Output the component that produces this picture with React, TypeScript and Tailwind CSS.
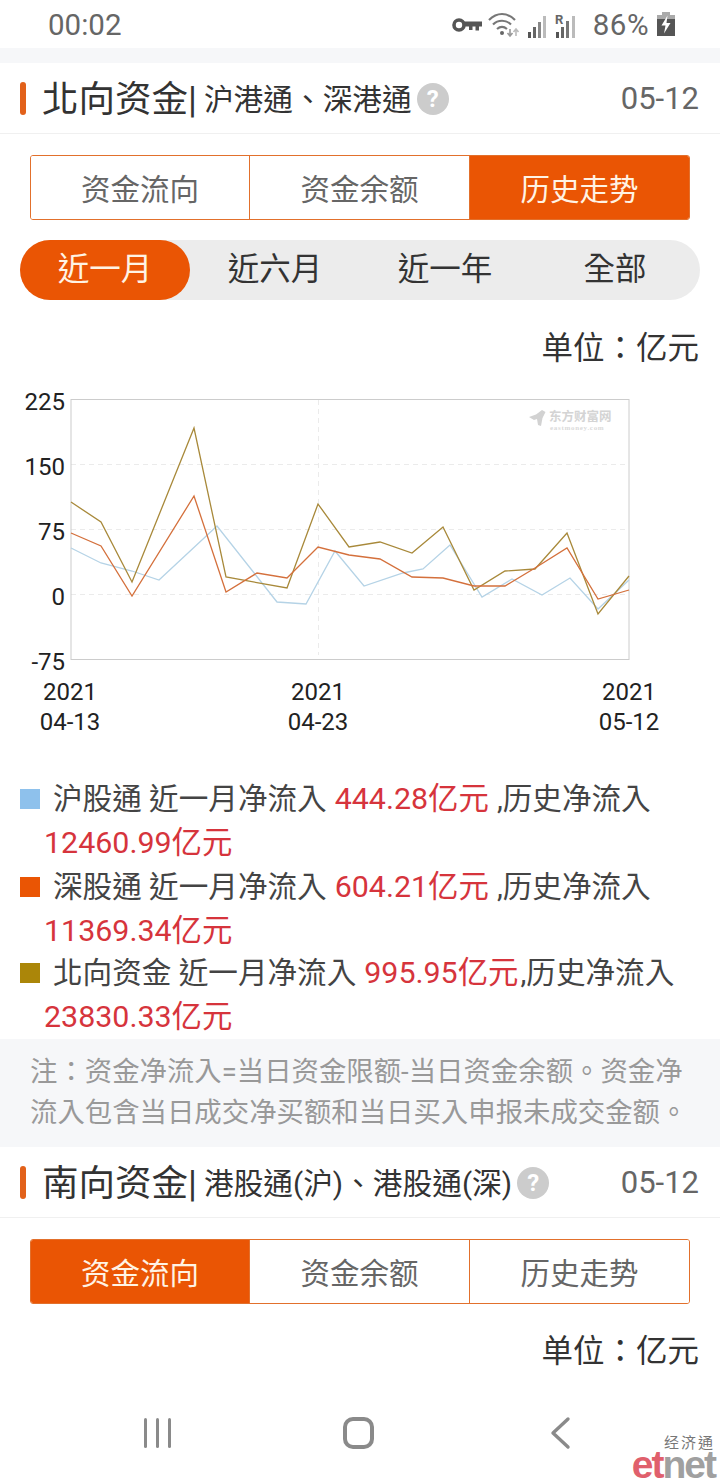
import React from 'react';

const FONT = 'font-["Roboto","Noto_Sans_CJK_TC",sans-serif]';

const gold = '71,502 101,522 132,582 194,428 226,577 287,588 318,504 349,547 380,542 412,553 443,527 474,590 505,571 535,569 567,533 598,614 629,576';
const orange = '71,533 101,546 132,596 194,496 226,592 257,573 287,578 318,547 349,555 380,559 412,577 443,578 474,586 505,586 535,568 567,548 598,599 629,590';
const blue = '71,548 101,563 132,571 159,580 217,526 277,602 306,604 335,551 364,586 403,573 423,569 450,545 482,597 512,579 542,595 570,578 598,609 629,580';

const StatusIcons = () => (
  <svg width="135" height="30" viewBox="0 0 135 30">
    {/* key */}
    <circle cx="11" cy="16" r="5" fill="none" stroke="#555" strokeWidth="3.600" />
    <path d="M16 12.500h18v5h-3v4h-3.500v-4h-3v3.500h-3.500v-3.500h-5z" fill="#555" />
    {/* wifi */}
    <path d="M41 11c8-8 18-8 26 0M45 15.500c5-5 13-5 18 0M49 20c3-2.500 7-2.500 10 0" fill="none" stroke="#777" strokeWidth="2.200" />
    <circle cx="54" cy="24" r="2" fill="#666" />
    <path d="M62 20v6M59.500 24l2.500 3 2.500-3" fill="none" stroke="#999" strokeWidth="1.600" />
    <path d="M68 27v-6M65.500 23l2.500-3 2.500 3" fill="none" stroke="#bbb" strokeWidth="1.600" />
    {/* signal */}
    <rect x="80" y="23" width="3" height="6" fill="#555" />
    <rect x="85" y="18" width="3" height="11" fill="#666" />
    <rect x="90" y="13" width="3" height="16" fill="#888" />
    <rect x="95" y="7" width="3" height="22" fill="#bbb" />
    {/* R signal */}
    <text x="107" y="15" fontSize="13" fontWeight="700" fill="#666" fontFamily="Roboto">R</text>
    <rect x="108" y="23" width="3" height="6" fill="#555" />
    <rect x="113" y="18" width="3" height="11" fill="#666" />
    <rect x="118" y="12" width="3" height="17" fill="#777" />
    <rect x="124" y="7" width="3" height="22" fill="#bbb" />
  </svg>
);

const Battery = () => (
  <svg width="18" height="24" viewBox="0 0 18 24">
    <rect x="5" y="0" width="8" height="3" fill="#aaa" />
    <rect x="0" y="3" width="18" height="4" fill="#aaa" />
    <rect x="0" y="7" width="18" height="17" fill="#555" />
    <path d="M10.500 3.500L4.500 13.500h4l-1.500 8 6.500-10.500h-4z" fill="#fff" />
  </svg>
);

const SectionHeader = ({ title, sub }: { title: string; sub: string }) => (
  <div className="h-[71px] flex items-center pl-5 pr-[21px] border-b border-[#f0f0f0] bg-white">
    <div className="w-[6px] h-[33px] rounded-[3px] bg-[#e2611a] mr-[16px]" />
    <span className="text-[36.500px] leading-[48px] text-[#333] pt-[4px]">{title}</span>
    <span className="text-[36.500px] leading-[48px] text-[#333] mr-[7px] pt-[4px]">|</span>
    <span className="text-[29.700px] leading-[40px] text-[#333] pt-[3px]">{sub}</span>
    <span className="ml-[5px] mt-[2px] w-[32px] h-[32px] rounded-full bg-[#cccccc] text-white text-[24px] font-bold flex items-center justify-center">?</span>
    <span className="ml-auto text-[31px] text-[#666] pt-[3px]">05-12</span>
  </div>
);

const Tabs = ({ active }: { active: number }) => (
  <div className="mx-[30px] h-[65px] flex rounded-[3px] border border-[#e2702c] overflow-hidden">
    {['资金流向', '资金余额', '历史走势'].map((t, i) => (
      <div
        key={t}
        className={`flex items-center justify-center pt-[5px] text-[29.500px] ${i === 0 ? 'w-[218px]' : i === 1 ? 'w-[220px]' : 'flex-1'} ${i > 0 ? 'border-l border-[#e2702c]' : ''} ${
          i === active ? 'bg-[#ea5504] text-[#fff3e4]' : 'bg-white text-[#666]'
        }`}
      >
        {t}
      </div>
    ))}
  </div>
);

const Unit = () => (
  <div className="pr-[21px] pt-[2px] text-right text-[31.500px] leading-[40px] text-[#333]">单位：亿元</div>
);

const Chart = () => (
  <svg width="720" height="350" viewBox="0 385 720 350" className="block">
    <g stroke="#ebebeb" strokeWidth="1" strokeDasharray="5 4">
      <line x1="71" y1="464.500" x2="629" y2="464.500" />
      <line x1="71" y1="529.500" x2="629" y2="529.500" />
      <line x1="71" y1="594.500" x2="629" y2="594.500" />
      <line x1="318.500" y1="400" x2="318.500" y2="655" />
    </g>
    <rect x="71" y="399.500" width="558" height="260" fill="none" stroke="#cccccc" />
    {/* watermark */}
    <path d="M529 417l7-2.500 6-4.500 3.500 2-3 6-1.500 8-3-1-1-6-3 1z" fill="#d2d2d2" />
    <text x="549" y="421" fontSize="12.500" fontWeight="700" fill="#d4d4d4" fontFamily="Liberation Serif, Noto Sans CJK SC">东方财富网</text>
    <text x="550" y="429.500" fontSize="7" fontWeight="700" fill="#dadada" fontFamily="Liberation Serif" letterSpacing="0.700">eastmoney.com</text>
    <polyline points={blue} fill="none" stroke="#b5d3e6" strokeWidth="1.300" />
    <polyline points={gold} fill="none" stroke="#a8893a" strokeWidth="1.300" />
    <polyline points={orange} fill="none" stroke="#d4703c" strokeWidth="1.300" />
    <g fontFamily="Roboto" fontSize="24" fill="#222" textAnchor="end">
      <text x="65" y="410">225</text>
      <text x="65" y="475">150</text>
      <text x="65" y="540">75</text>
      <text x="65" y="605">0</text>
      <text x="65" y="670">-75</text>
    </g>
    <g fontFamily="Roboto" fontSize="24" fill="#222" textAnchor="middle">
      <text x="70" y="700">2021</text>
      <text x="70" y="730">04-13</text>
      <text x="318" y="700">2021</text>
      <text x="318" y="730">04-23</text>
      <text x="629" y="700">2021</text>
      <text x="629" y="730">05-12</text>
    </g>
  </svg>
);

const LegendRow = ({ color, name, month, total, extra }: { color: string; name: string; month: string; total: string; extra?: string }) => (
  <div className={`pl-5 pr-4 text-[29.600px] leading-[44px] text-[#444] ${extra ?? ''}`}>
    <div className="flex items-center whitespace-nowrap pt-[1px]">
      <span className={`w-5 h-5 mr-[13px] shrink-0 ${color}`} />
      <span>{name} 近一月净流入</span>
      <span className="text-[#d6343c] text-[30.400px] ml-[8px]">{month}</span>
      <span className={name.length > 3 ? 'ml-[2px]' : 'ml-[8px]'}>,历史净流入</span>
    </div>
    <div className="pl-[24px] text-[#d6343c] text-[30.400px]">{total}</div>
  </div>
);

export default function App() {
  return (
    <div className={`${FONT} relative w-[720px] h-[1480px] bg-white overflow-hidden flex flex-col`}>
      {/* status bar */}
      <div className="h-[48px] shrink-0 flex items-center pl-[48px] pr-[45px] text-[29.500px] text-[#666]">
        <span className="pt-[3px]">00:02</span>
        <div className="ml-auto flex items-center">
          <StatusIcons />
          <span className="ml-[10px] mr-[8px] tracking-[0.5px] pt-[3px]">86%</span>
          <Battery />
        </div>
      </div>
      <div className="h-[15px] shrink-0 bg-[#f6f7f9]" />

      <SectionHeader title="北向资金" sub="沪港通、深港通" />

      <div className="pt-[21px]">
        <Tabs active={2} />
      </div>

      <div className="mx-5 mt-5 h-[60px] flex rounded-full bg-[#ececec] text-[31.500px] text-[#333]">
        {['近一月', '近六月', '近一年', '全部'].map((t, i) => (
          <div
            key={t}
            className={`w-[170px] flex items-center justify-center rounded-full ${i === 0 ? 'bg-[#ea5504] text-[#fff3e4]' : ''}`}
          >
            {t}
          </div>
        ))}
      </div>

      <div className="mt-[27px] h-[58px]">
        <Unit />
      </div>

      <Chart />

      <div className="mt-[41px]">
        <LegendRow color="bg-[#8ec1ec]" name="沪股通" month="444.28亿元" total="12460.99亿元" />
        <LegendRow color="bg-[#ea5504]" name="深股通" month="604.21亿元" total="11369.34亿元" extra="-mt-[1px]" />
        <LegendRow color="bg-[#ab8609]" name="北向资金" month="995.95亿元" total="23830.33亿元" extra="-mt-[3px]" />
      </div>

      <div className="h-[108px] shrink-0 bg-[#f6f7f9] px-[30px] pt-[13px] text-[27.400px] leading-[41px] text-[#999]">
        注：资金净流入=当日资金限额-当日资金余额。资金净流入包含当日成交净买额和当日买入申报未成交金额。
      </div>

      <SectionHeader title="南向资金" sub="港股通(沪)、港股通(深)" />

      <div className="pt-[21px]">
        <Tabs active={0} />
      </div>

      <div className="mt-[26px]">
        <Unit />
      </div>

      {/* nav bar */}
      <div className="mt-auto h-[80px] shrink-0 flex items-start pt-[17px] pl-[144px]">
        <div className="flex gap-[9px] mt-[1px]">
          <span className="w-[3px] h-[30px] rounded-full bg-[#8a8a8a]" />
          <span className="w-[3px] h-[30px] rounded-full bg-[#8a8a8a]" />
          <span className="w-[3px] h-[30px] rounded-full bg-[#8a8a8a]" />
        </div>
        <div className="ml-[172px] w-[31px] h-[32px] rounded-[10px] border-[4px] border-[#8a8a8a]" />
        <svg className="ml-[174px] -mt-[1px]" width="26" height="34" viewBox="0 0 26 34">
          <path d="M20 3L5 17l15 14" fill="none" stroke="#8a8a8a" strokeWidth="3.400" strokeLinecap="round" strokeLinejoin="round" />
        </svg>
      </div>

      {/* etnet badge */}
      <div className="absolute right-[5px] bottom-[2px] flex flex-col items-end">
        <span className="text-[15px] leading-[18px] tracking-[2px] text-[#777]">经济通</span>
        <span className="text-[39px] leading-[26px] font-bold tracking-[-2px] font-['Liberation_Sans',sans-serif]">
          <span className="text-[#e0606c]">et</span>
          <span className="text-[#a0a0a0]">net</span>
        </span>
      </div>
    </div>
  );
}
